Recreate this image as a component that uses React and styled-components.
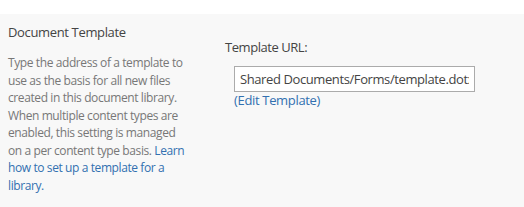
import React from "react"
import styled, { createGlobalStyle } from "styled-components"

const GlobalStyle = createGlobalStyle`
  html, body {
    margin: 0;
    padding: 0;
    background: #f8f8f8;
  }
  body {
    font-family: "Open Sans", "Noto Sans", sans-serif;
  }
`

const Page = styled.div`
  width: 524px;
  height: 207px;
  background: #f8f8f8;
  border-top: 14px solid #ffffff;
  box-sizing: border-box;
  overflow: hidden;
`

const Section = styled.section`
  display: flex;
  padding: 9px 0 0 8px;
`

const Description = styled.div`
  width: 196px;
  flex-shrink: 0;

  h3 {
    margin: 0 0 13px;
    font-size: 13px;
    line-height: 18px;
    letter-spacing: -0.35px;
    font-weight: normal;
    color: #444444;
  }

  p {
    width: 183px;
    margin: 0;
    font-size: 12px;
    line-height: 17.5px;
    letter-spacing: -0.4px;
    color: #777777;
  }

  a {
    color: #3270b0;
    text-decoration: none;
  }
`

const Field = styled.div`
  padding: 15px 0 0 21px;
  display: flex;
  flex-direction: column;
`

const Label = styled.label`
  font-size: 13px;
  line-height: 18px;
  letter-spacing: -0.45px;
  color: #444444;
  margin-bottom: 10px;
`

const Input = styled.input`
  box-sizing: border-box;
  width: 241px;
  height: 26px;
  margin-left: 9px;
  padding: 0 5px;
  border: 1px solid #ababab;
  background: #ffffff;
  font-family: "Open Sans", "Noto Sans", sans-serif;
  font-size: 13px;
  letter-spacing: -0.4px;
  color: #444444;
  outline: none;
`

const EditLink = styled.a`
  margin-left: 9px;
  font-size: 13px;
  line-height: 17px;
  letter-spacing: -0.33px;
  color: #3270b0;
  text-decoration: none;
`

const App = () => {
  return (
    <Page>
      <GlobalStyle />
      <Section>
        <Description>
          <h3>Document Template</h3>
          <p>
            Type the address of a template to use as the basis for all new
            files created in this document library. When multiple content
            types are enabled, this setting is managed on a per content type
            basis. <a href="#">Learn how to set up a template for a library.</a>
          </p>
        </Description>
        <Field>
          <Label>Template URL:</Label>
          <Input readOnly value="Shared Documents/Forms/template.dotx" />
          <EditLink href="#">(Edit Template)</EditLink>
        </Field>
      </Section>
    </Page>
  )
}

export default App
